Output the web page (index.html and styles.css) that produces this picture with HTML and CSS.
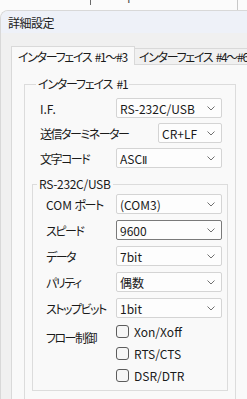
FILE: index.html
```html
<!DOCTYPE html>
<html lang="ja">
<head>
  <meta charset="UTF-8">
  <meta name="viewport" content="width=device-width, initial-scale=1.0">
  <title>詳細設定</title>
  <link rel="stylesheet" href="styles.css">
</head>
<body>

  <!-- 後ろのウィンドウ -->
  <div class="backdrop">
    <span class="bd-line bd-line-a"></span>
    <span class="bd-glyph">ト</span>
    <span class="bd-line bd-line-b"></span>
  </div>

  <div class="window">
    <div class="titlebar">詳細設定</div>

    <div class="client">
      <div class="tabs">
        <div class="tab active">インターフェイス #1～#3</div>
        <div class="tab">インターフェイス #4～#6</div>
      </div>

      <div class="panel">
        <fieldset class="group group-if">
          <legend>インターフェイス #1</legend>

          <div class="form-rows rows-if">
            <span class="label latin">I.F.</span>
            <div class="combo"><span>RS-232C/USB</span><svg class="chev" width="8" height="5" viewBox="0 0 8 5"><polyline points="0.5,0.5 4,4 7.5,0.5"/></svg></div>

            <span class="label">送信ターミネーター</span>
            <div class="combo short"><span>CR+LF</span><svg class="chev" width="8" height="5" viewBox="0 0 8 5"><polyline points="0.5,0.5 4,4 7.5,0.5"/></svg></div>

            <span class="label">文字コード</span>
            <div class="combo"><span>ASC<span class="roman">Ⅱ</span></span><svg class="chev" width="8" height="5" viewBox="0 0 8 5"><polyline points="0.5,0.5 4,4 7.5,0.5"/></svg></div>
          </div>

          <fieldset class="group group-rs">
            <legend>RS-232C/USB</legend>

            <div class="form-rows rows-rs">
              <span class="label"><span class="latin">COM </span>ポート</span>
              <div class="combo"><span>(COM3)</span><svg class="chev" width="8" height="5" viewBox="0 0 8 5"><polyline points="0.5,0.5 4,4 7.5,0.5"/></svg></div>

              <span class="label">スピード</span>
              <div class="combo edit"><span>9600</span><svg class="chev" width="8" height="5" viewBox="0 0 8 5"><polyline points="0.5,0.5 4,4 7.5,0.5"/></svg></div>

              <span class="label">データ</span>
              <div class="combo"><span>7bit</span><svg class="chev" width="8" height="5" viewBox="0 0 8 5"><polyline points="0.5,0.5 4,4 7.5,0.5"/></svg></div>

              <span class="label">パリティ</span>
              <div class="combo"><span>偶数</span><svg class="chev" width="8" height="5" viewBox="0 0 8 5"><polyline points="0.5,0.5 4,4 7.5,0.5"/></svg></div>

              <span class="label">ストップビット</span>
              <div class="combo"><span>1bit</span><svg class="chev" width="8" height="5" viewBox="0 0 8 5"><polyline points="0.5,0.5 4,4 7.5,0.5"/></svg></div>

              <span class="label flow-label">フロー制御</span>
              <div class="checks">
                <label class="check"><span class="box"></span>Xon/Xoff</label>
                <label class="check"><span class="box"></span>RTS/CTS</label>
                <label class="check"><span class="box"></span>DSR/DTR</label>
              </div>
            </div>
          </fieldset>
        </fieldset>
      </div>
    </div>
  </div>

</body>
</html>
```

FILE: styles.css
```css
body {
  margin: 0;
  width: 247px;
  height: 399px;
  overflow: hidden;
  background-color: #fbfbfb;
  font-family: "Noto Sans CJK JP", "Noto Sans", sans-serif;
  font-size: 12px;
  font-feature-settings: "palt";
  color: #1a1a1a;
}

/* 後ろのウィンドウの切れ端 */
.backdrop {
  position: relative;
  height: 10px;
  overflow: hidden;
  background-color: #fbfbfb;
}

.bd-line {
  position: absolute;
  top: 0;
  width: 1px;
}

.bd-line-a {
  left: 90px;
  height: 5px;
  background-color: #6a6a6a;
}

.bd-line-b {
  left: 237px;
  height: 10px;
  background-color: #c8c8c8;
}

.bd-glyph {
  position: absolute;
  left: 126px;
  top: -9px;
  line-height: 14px;
  color: #444;
}

/* ダイアログ */
.window {
  width: 300px;
  background-color: #f0f0f0;
  border-top-left-radius: 8px;
  border-top: 1px solid #d8d8d8;
  border-left: 1px solid #d8d8d8;
  box-sizing: border-box;
}

.titlebar {
  height: 22px;
  line-height: 23px;
  padding-left: 7px;
  letter-spacing: -0.5px;
  background-color: #eef1f8;
  border-top-left-radius: 7px;
}

.client {
  padding-top: 13px;
}

/* タブ */
.tabs {
  display: flex;
  align-items: flex-end;
  padding-left: 10px;
  white-space: nowrap;
  letter-spacing: -1.3px;
  word-spacing: 2px;
}

.tab {
  height: 16px;
  line-height: 15px;
  padding: 0 4px;
  box-sizing: border-box;
  border: 1px solid #d9d9d9;
  border-left: none;
  border-bottom: none;
  background-color: #f0f0f0;
}

.tab.active {
  position: relative;
  z-index: 1;
  width: 124px;
  height: 19px;
  margin-bottom: -1px;
  padding: 2px 0 0 6px;
  border-left: 1px solid #d9d9d9;
  background-color: #f9f9f9;
}

.panel {
  height: 400px;
  margin-left: 10px;
  padding: 12px 0 0 12px;
  background-color: #f9f9f9;
  border-top: 1px solid #d9d9d9;
  border-left: 1px solid #d9d9d9;
}

/* グループボックス */
.group {
  margin: 0;
  min-width: 0;
  border: 1px solid #dcdcdc;
  box-sizing: border-box;
}

.group legend {
  margin-left: 4px;
  padding: 0 2px;
  line-height: 14px;
  letter-spacing: -1.2px;
  word-spacing: 3px;
}

.group-rs legend {
  letter-spacing: -0.3px;
}

.group-if {
  width: 212px;
  padding: 0 7px 8px 7px;
}

.group-rs {
  margin-top: 9px;
  padding: 0;
}

.form-rows {
  display: grid;
  align-items: center;
}

.rows-if {
  grid-template-columns: 76px 1fr;
  row-gap: 5px;
  padding: 7px 6px 0 8px;
}

.rows-rs {
  grid-template-columns: 70px 1fr;
  row-gap: 6px;
  padding: 3px 5px 8px 13px;
}

.label {
  white-space: nowrap;
  letter-spacing: -1.5px;
}

.label .latin,
.label.latin {
  letter-spacing: 0;
}

/* コンボボックス */
.combo {
  display: flex;
  align-items: center;
  justify-content: space-between;
  height: 20px;
  box-sizing: border-box;
  padding: 0 6px 0 3px;
  border: 1px solid #d4d4d4;
  border-radius: 2px;
  background-color: #fdfdfd;
}

.combo.short {
  width: 64px;
  justify-self: end;
}

.combo.edit {
  border-color: #7a7a7a;
}

.roman {
  font-family: "DejaVu Sans", sans-serif;
  font-size: 11px;
}

.chev polyline {
  fill: none;
  stroke: #707070;
  stroke-width: 1;
}

/* チェックボックス */
.flow-label {
  align-self: start;
  margin-top: 7px;
  line-height: 13px;
}

.checks {
  display: flex;
  flex-direction: column;
  gap: 9px;
  margin-top: 1px;
}

.check {
  display: flex;
  align-items: center;
  gap: 5px;
  height: 13px;
  line-height: 13px;
}

.box {
  width: 13px;
  height: 13px;
  box-sizing: border-box;
  border: 1px solid #5c5c5c;
  border-radius: 3px;
  background-color: #f6f6f6;
}
```
